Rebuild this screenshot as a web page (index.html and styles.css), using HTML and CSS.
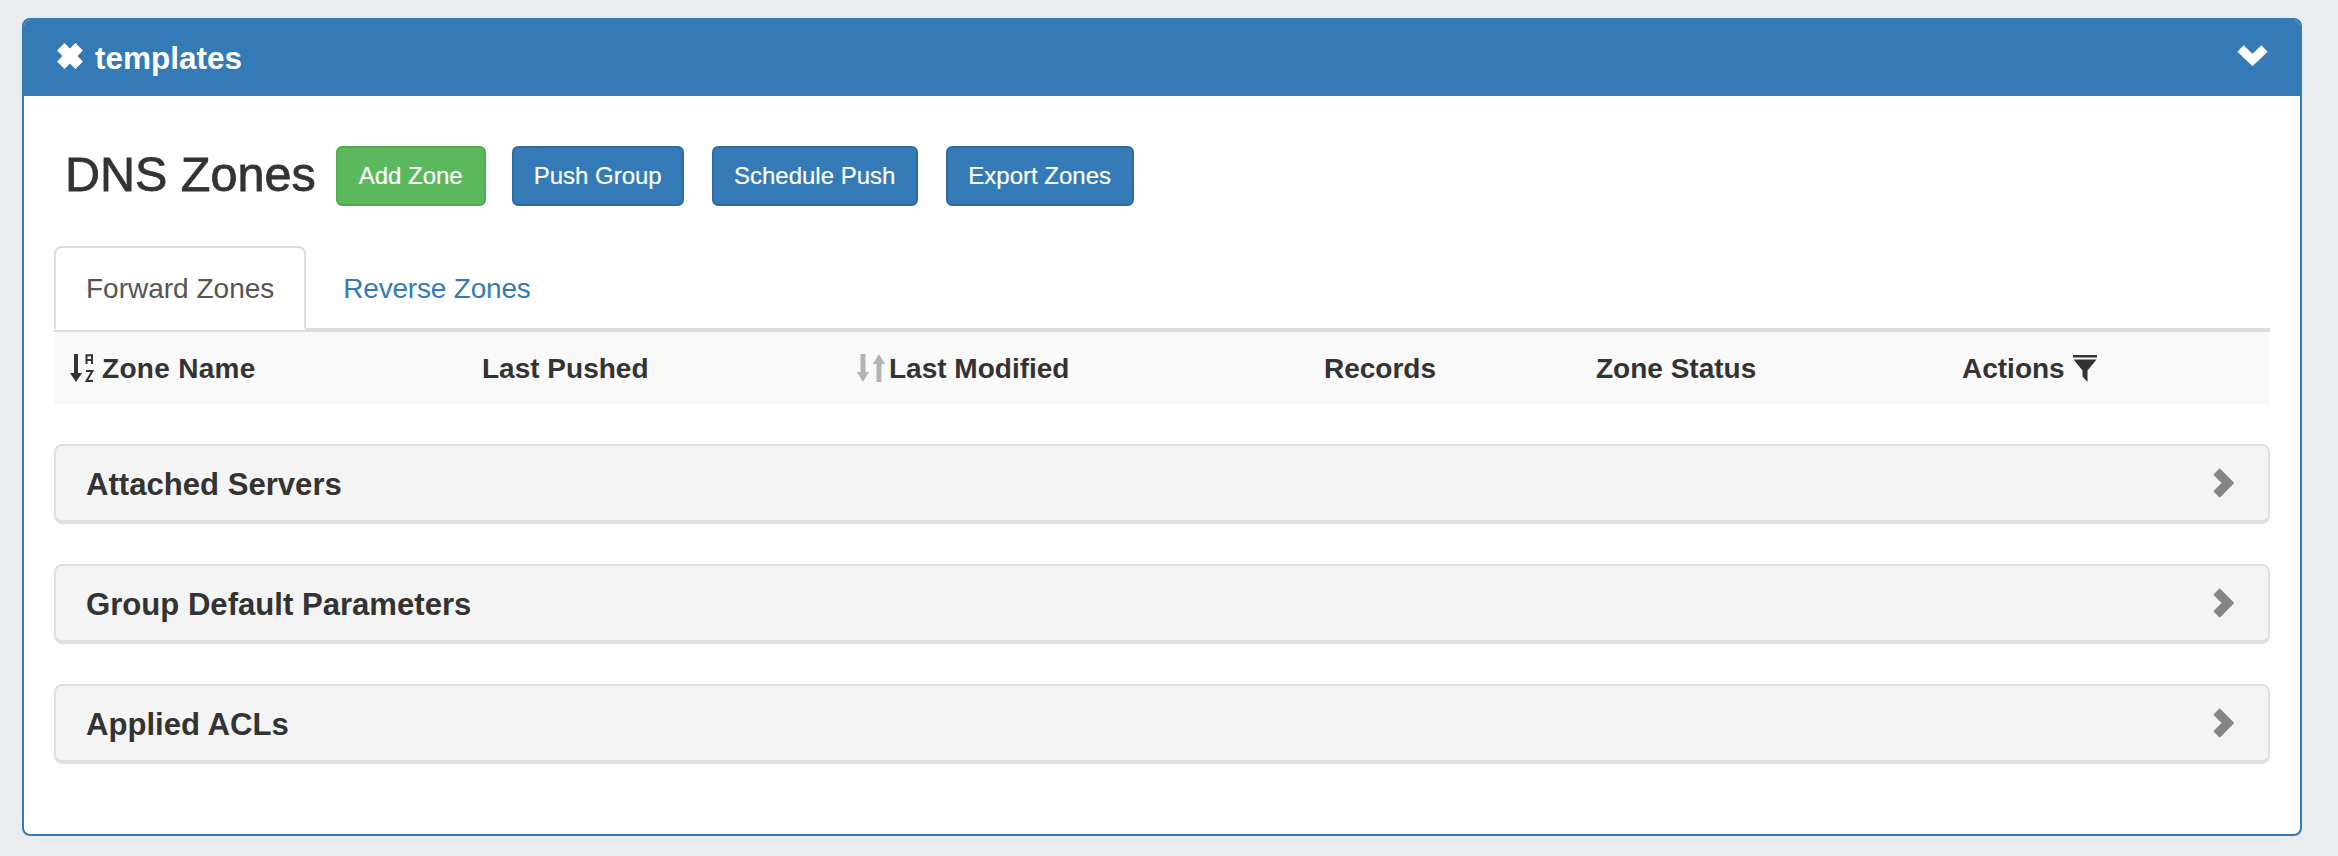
FILE: index.html
```html
<!DOCTYPE html>
<html lang="en">
<head>
<meta charset="utf-8">
<title>DNS Zones</title>
<link rel="stylesheet" href="styles.css">
</head>
<body>
<section class="panel">
  <header class="panel-head">
    <div class="panel-title">
      <svg class="icon-x" viewBox="0 0 26 26"><path d="M7.500 0 13 5.500 18.500 0 26 7.500 20.500 13 26 18.500 18.500 26 13 20.500 7.500 26 0 18.500 5.500 13 0 7.500Z" fill="#fff"/></svg>
      <span class="panel-name">templates</span>
    </div>
    <svg class="icon-collapse" viewBox="0 0 31 21"><path d="M3.500 3.500 15.500 15 27.500 3.500" fill="none" stroke="#fff" stroke-width="9"/></svg>
  </header>
  <div class="panel-body">
    <div class="title-row">
      <h1>DNS Zones</h1>
      <div class="actions">
        <button class="btn btn-green btn-add">Add Zone</button>
        <button class="btn btn-blue btn-push">Push Group</button>
        <button class="btn btn-blue btn-schedule">Schedule Push</button>
        <button class="btn btn-blue btn-export">Export Zones</button>
      </div>
    </div>
    <nav class="tabs">
      <a class="tab tab-active"><span>Forward Zones</span></a>
      <a class="tab tab-link"><span>Reverse Zones</span></a>
    </nav>
    <div class="table-head">
      <div class="th">
        <svg class="icon-sort" viewBox="0 0 24 28">
          <path d="M6 0V22" stroke="#333" stroke-width="4" fill="none"/>
          <path d="M0 19H12L6 28Z" fill="#333"/>
          <path d="M16.500 10V1.200H22V10M16.500 6H22" stroke="#333" stroke-width="2" fill="none"/>
          <path d="M16 17H22.500L16.500 27H23" stroke="#333" stroke-width="2" fill="none"/>
        </svg>
        <span class="th-label th-name">Zone Name</span>
      </div>
      <div class="th"><span class="th-label">Last Pushed</span></div>
      <div class="th">
        <svg class="icon-sort-off" viewBox="0 0 28 28">
          <path d="M6 0V22" stroke="#b3b3b3" stroke-width="5" fill="none"/>
          <path d="M0 18H12L6 28Z" fill="#b3b3b3"/>
          <path d="M22 6V28" stroke="#b3b3b3" stroke-width="5" fill="none"/>
          <path d="M16 10H28L22 0Z" fill="#b3b3b3"/>
        </svg>
        <span class="th-label">Last Modified</span>
      </div>
      <div class="th"><span class="th-label">Records</span></div>
      <div class="th"><span class="th-label">Zone Status</span></div>
      <div class="th">
        <span class="th-label">Actions</span>
        <svg class="icon-filter" viewBox="0 0 24 27">
          <path d="M0 0H24V2.500H0Z" fill="#333"/>
          <path d="M0.500 4.500H23.500L14.500 15.500V27L9.500 21.500V15.500Z" fill="#333"/>
        </svg>
      </div>
    </div>
    <div class="section"><h2>Attached Servers</h2><svg class="icon-expand" viewBox="0 0 21 30"><path d="M3.500 3.500 15 15 3.500 26.500" fill="none" stroke="#858585" stroke-width="9"/></svg></div>
    <div class="section"><h2>Group Default Parameters</h2><svg class="icon-expand" viewBox="0 0 21 30"><path d="M3.500 3.500 15 15 3.500 26.500" fill="none" stroke="#858585" stroke-width="9"/></svg></div>
    <div class="section"><h2>Applied ACLs</h2><svg class="icon-expand" viewBox="0 0 21 30"><path d="M3.500 3.500 15 15 3.500 26.500" fill="none" stroke="#858585" stroke-width="9"/></svg></div>
  </div>
</section>
</body>
</html>
```
FILE: styles.css
```css
* { box-sizing: border-box; }
html, body { margin: 0; height: 856px; overflow: hidden; }
body {
  background: #e9edf0;
  padding: 18px 36px 20px 22px;
  font-family: "Liberation Sans", Arial, sans-serif;
  color: #333;
}
.panel {
  height: 818px;
  background: #fff;
  border: 2px solid #337ab7;
  border-radius: 8px;
  overflow: hidden;
}
.panel-head {
  height: 78px;
  margin: -2px -2px 0;
  background: #337ab7;
  color: #fff;
  display: flex;
  align-items: center;
  justify-content: space-between;
  padding: 0 34px 0 35px;
}
.panel-title {
  display: flex;
  align-items: center;
  gap: 12px;
  font-size: 31.5px;
  font-weight: 700;
}
.panel-name { margin-top: 3px; }
.icon-x { width: 26px; height: 26px; margin-top: -2px; }
.icon-collapse { width: 31px; height: 21px; margin-top: -3px; }
.panel-body { padding: 50px 30px 0; }
.title-row {
  display: flex;
  align-items: center;
  height: 60px;
  padding-left: 11px;
}
h1 {
  margin: -4px 0 0;
  font-size: 48.5px;
  font-weight: 400;
  line-height: 60px;
  -webkit-text-stroke: 0.8px #333;
}
.actions { display: flex; gap: 26px; margin-left: 20px; }
.btn {
  height: 60px;
  padding: 0;
  border-radius: 6px;
  border: 2px solid;
  color: #fff;
  font: 24px "Liberation Sans", Arial, sans-serif;
  -webkit-text-stroke: 0.2px #fff;
}
.btn-green { background: #5cb85c; border-color: #4cae4c; }
.btn-blue { background: #337ab7; border-color: #2e6da4; }
.btn-add { width: 150px; }
.btn-push { width: 172px; }
.btn-schedule { width: 206px; margin-left: 2px; }
.btn-export { width: 188px; margin-left: 2px; }
.tabs {
  display: flex;
  height: 84px;
  margin-top: 40px;
  border-bottom: 2px solid #ddd;
}
.tab {
  height: 84px;
  padding: 2px 30px 0;
  display: flex;
  align-items: center;
  font-size: 28px;
  color: #337ab7;
  border: 2px solid transparent;
  border-radius: 8px 8px 0 0;
}
.tab-link { letter-spacing: -0.2px; margin-left: 5px; }
.tab-active {
  color: #555;
  background: #fff;
  border-color: #ddd;
  border-bottom-color: #fff;
}
.table-head {
  display: grid;
  grid-template-columns: 412px 375px 467px 272px 366px 324px;
  height: 74px;
  align-items: center;
  background: #f9f9f9;
  border-top: 2px solid #ddd;
  font-size: 28px;
  font-weight: 700;
}
.th { display: flex; align-items: center; padding-left: 16px; }
.th-label { margin-top: 2px; }
.th-name { letter-spacing: 0.3px; }
.icon-sort { width: 24px; height: 28px; margin-right: 8px; }
.icon-sort-off { width: 28px; height: 28px; margin-right: 4px; }
.icon-filter { width: 24px; height: 27px; margin-left: 8px; }
.section {
  display: flex;
  align-items: center;
  justify-content: space-between;
  height: 80px;
  margin-top: 40px;
  padding: 0 34px 0 30px;
  background: #f4f4f4;
  border: 2px solid #e0e0e0;
  border-bottom-width: 4px;
  border-radius: 8px;
}
h2 {
  margin: 3px 0 0;
  font-size: 31.100px;
  font-weight: 700;
}
.icon-expand { width: 21px; height: 30px; }
```
